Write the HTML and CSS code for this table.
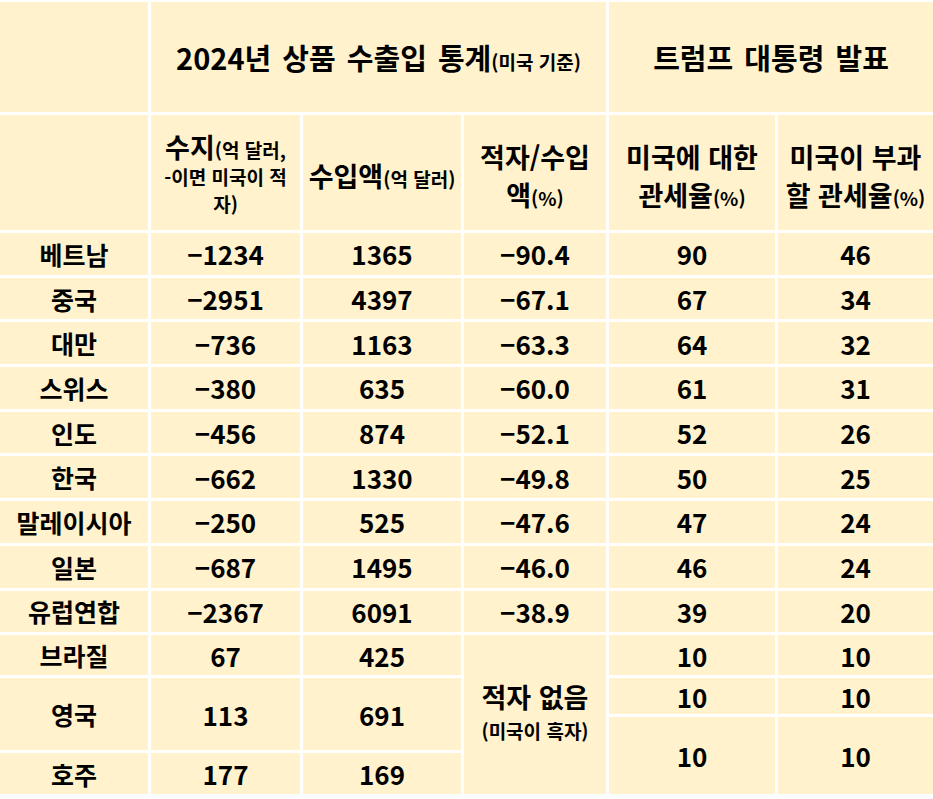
FILE: index.html
```html
<!DOCTYPE html>
<html lang="ko">
<head>
<meta charset="utf-8">
<link rel="stylesheet" href="styles.css">
</head>
<body>
<div class="table">
  <div class="cell"></div>
  <div class="cell title span3c"><div><span class="ttl">2024년 상품 수출입 통계</span><span class="sm">(미국 기준)</span></div></div>
  <div class="cell title span2c"><div><span class="ttl">트럼프 대통령 발표</span></div></div>

  <div class="cell"></div>
  <div class="cell head head-tight"><div><span class="big">수지</span><span class="sm">(억 달러,<br>-이면 미국이 적<br>자)</span></div></div>
  <div class="cell head"><div><span class="big">수입액</span><span class="sm">(억 달러)</span></div></div>
  <div class="cell head"><div><span class="big">적자/수입<br>액</span><span class="sm">(%)</span></div></div>
  <div class="cell head"><div><span class="big">미국에 대한<br>관세율</span><span class="sm">(%)</span></div></div>
  <div class="cell head"><div><span class="big">미국이 부과<br>할 관세율</span><span class="sm">(%)</span></div></div>

  <div class="cell name">베트남</div><div class="cell num">−1234</div><div class="cell num">1365</div><div class="cell num">−90.4</div><div class="cell num">90</div><div class="cell num">46</div>
  <div class="cell name">중국</div><div class="cell num">−2951</div><div class="cell num">4397</div><div class="cell num">−67.1</div><div class="cell num">67</div><div class="cell num">34</div>
  <div class="cell name">대만</div><div class="cell num">−736</div><div class="cell num">1163</div><div class="cell num">−63.3</div><div class="cell num">64</div><div class="cell num">32</div>
  <div class="cell name">스위스</div><div class="cell num">−380</div><div class="cell num">635</div><div class="cell num">−60.0</div><div class="cell num">61</div><div class="cell num">31</div>
  <div class="cell name">인도</div><div class="cell num">−456</div><div class="cell num">874</div><div class="cell num">−52.1</div><div class="cell num">52</div><div class="cell num">26</div>
  <div class="cell name">한국</div><div class="cell num">−662</div><div class="cell num">1330</div><div class="cell num">−49.8</div><div class="cell num">50</div><div class="cell num">25</div>
  <div class="cell name">말레이시아</div><div class="cell num">−250</div><div class="cell num">525</div><div class="cell num">−47.6</div><div class="cell num">47</div><div class="cell num">24</div>
  <div class="cell name">일본</div><div class="cell num">−687</div><div class="cell num">1495</div><div class="cell num">−46.0</div><div class="cell num">46</div><div class="cell num">24</div>
  <div class="cell name">유럽연합</div><div class="cell num">−2367</div><div class="cell num">6091</div><div class="cell num">−38.9</div><div class="cell num">39</div><div class="cell num">20</div>

  <div class="cell name">브라질</div><div class="cell num">67</div><div class="cell num">425</div>
  <div class="cell head span4r surplus"><div><span class="big">적자 없음</span><br><span class="sm">(미국이 흑자)</span></div></div>
  <div class="cell num">10</div><div class="cell num">10</div>

  <div class="cell name span2r">영국</div><div class="cell num span2r">113</div><div class="cell num span2r">691</div>
  <div class="cell num">10</div><div class="cell num">10</div>

  <div class="cell num span2r">10</div><div class="cell num span2r">10</div>

  <div class="cell name">호주</div><div class="cell num">177</div><div class="cell num">169</div>
</div>
</body>
</html>
```
FILE: styles.css
```css
html, body {
  margin: 0;
  padding: 0;
  background: #ffffff;
}
body {
  padding-top: 2px;
  font-family: "Noto Sans CJK KR", "Noto Sans", sans-serif;
  font-weight: 700;
  color: #000000;
}
.table {
  display: grid;
  grid-template-columns: 148px 149px 158px 142px 166px 155px;
  grid-template-rows: 110px 115px repeat(9, 41.7px) 40px 36px 33px 41px;
  gap: 3px;
  width: 933px;
  background: #ffffff;
}
.cell {
  background: #fff2cc;
  display: flex;
  align-items: center;
  justify-content: center;
  text-align: center;
  white-space: nowrap;
}
.span3c { grid-column: span 3; }
.span2c { grid-column: span 2; }
.span2r { grid-row: span 2; }
.span4r { grid-row: span 4; }

.title .ttl {
  font-size: 29px;
  word-spacing: 3px;
}
.sm {
  font-size: 19px;
}
.head {
  line-height: 33px;
  padding-top: 10px;
}
.head .big {
  font-size: 27px;
}
.head-tight {
  line-height: 26px;
  padding-top: 6px;
}
.surplus {
  line-height: 30px;
  padding-top: 0;
}
.name {
  font-size: 25px;
}
.num {
  font-size: 26px;
}
```
